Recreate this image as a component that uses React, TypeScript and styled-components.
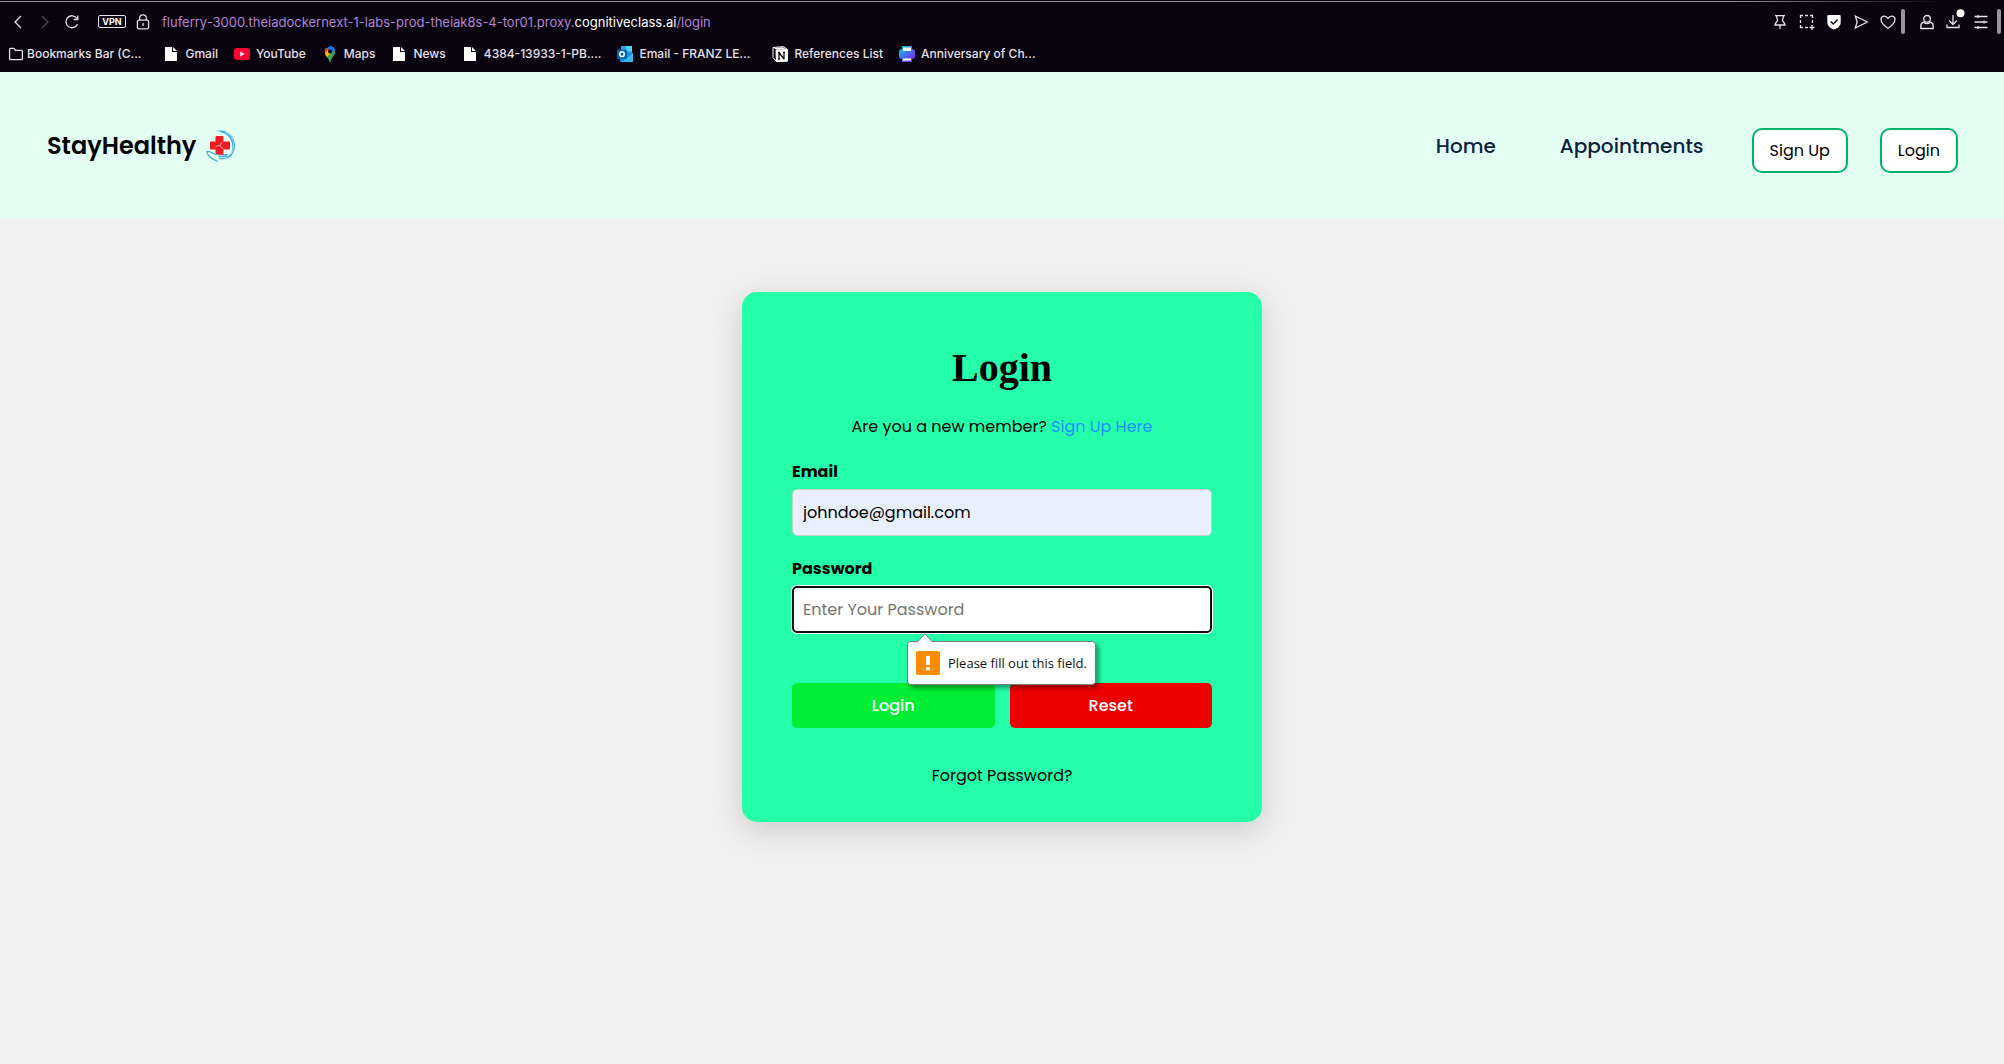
import React from "react";
import styled, { createGlobalStyle } from "styled-components";

const GlobalStyle = createGlobalStyle`
  * { box-sizing: border-box; }
  body {
    margin: 0;
    background: #f1f1f1;
    color: #000;
    font-family: Poppins, Inter, "Liberation Sans", sans-serif;
    font-size: 16px;
    line-height: 24px;
  }
  button, input { font: inherit; }
  a { color: inherit; text-decoration: none; }
`;

const Page = styled.div`
  min-height: 100vh;
  display: flex;
  flex-direction: column;
`;

/* ---------- browser chrome ---------- */

const Chrome = styled.header`
  display: flex;
  flex-direction: column;
  height: 72px;
  padding-top: 1px;
  background: #09030f;
  color: #e6e0ea;
  font-family: Inter, "Liberation Sans", sans-serif;
`;

const TopLine = styled.div`
  height: 1px;
  background: linear-gradient(90deg, #9a939f 0%, #9a939f 86%, #09030f 97%);
`;

const AddressRow = styled.div`
  display: flex;
  align-items: center;
  height: 39px;
  padding: 0 3px 0 4px;
`;

const IconButton = styled.button<{ $dim?: boolean }>`
  display: flex;
  flex: none;
  align-items: center;
  justify-content: center;
  width: 27px;
  height: 25px;
  padding: 0;
  border: 0;
  background: none;
  color: ${(p) => (p.$dim ? "#4d4852" : "#e6e0ea")};
`;

const NavButtons = styled.div`
  display: flex;
`;

const VpnBadge = styled.span`
  margin-left: 13px;
  width: 28px;
  height: 13px;
  border: 1px solid #e6e0ea;
  border-radius: 2px;
  color: #fff;
  font-size: 9px;
  font-weight: 700;
  line-height: 11px;
  text-align: center;
`;

const Lock = styled.span`
  display: flex;
  margin: 0 11px 0 9px;
`;

const Address = styled.span`
  flex: 1;
  color: #b083d6;
  font-size: 13px;
  line-height: 20px;
  white-space: nowrap;
`;

const Host = styled.span`
  color: #fff;
`;

const Tools = styled.div`
  display: flex;
  align-items: center;
`;

const Divider = styled.span`
  width: 4px;
  height: 25px;
  border-radius: 2px;
  background: #99959c;
`;

const ToolGroup = styled.div`
  display: flex;
  margin: 0 3px 0 8px;
`;

const Bookmarks = styled.nav`
  display: flex;
  align-items: center;
  gap: 16px;
  height: 26px;
  padding-left: 8px;
`;

const Bookmark = styled.a<{ $cut?: boolean; $tight?: boolean }>`
  display: flex;
  align-items: center;
  gap: ${(p) => (p.$tight ? "3px" : "6px")};
  padding-right: ${(p) => (p.$cut ? "6px" : "0")};
  font-size: 12px;
  font-weight: 500;
  line-height: 16px;
  white-space: nowrap;
`;

/* ---------- site header ---------- */

const SiteHeader = styled.div`
  display: flex;
  align-items: center;
  justify-content: space-between;
  height: 147px;
  padding: 0 46px 0 47px;
  background: #e3fff3;
`;

const Brand = styled.a`
  display: flex;
  align-items: center;
  gap: 9px;
  font-size: 24px;
  font-weight: 600;
  line-height: 36px;
`;

const Menu = styled.nav`
  display: flex;
  align-items: center;
  gap: 32px;
`;

const MenuLink = styled.a`
  padding: 0 16px;
  color: #0d213f;
  font-size: 20px;
  font-weight: 500;
  line-height: 30px;
`;

const OutlineButton = styled.button`
  height: 45px;
  margin-top: 10px;
  padding: 0 16px;
  border: 2px solid #00b26e;
  border-radius: 10px;
  background: #fff;
  color: #000;
`;

/* ---------- login card ---------- */

const Main = styled.main`
  display: flex;
  justify-content: center;
  padding-top: 73px;
`;

const Card = styled.form`
  width: 520px;
  padding: 52px 50px 34px;
  border-radius: 15px;
  background: #26ffaa;
  box-shadow: 0 8px 32px rgba(0, 0, 0, 0.16);
`;

const Title = styled.h1`
  margin: 0 0 23px;
  font-family: "Liberation Serif", serif;
  font-size: 40px;
  line-height: 48px;
  text-align: center;
`;

const Centered = styled.p`
  margin: 0;
  text-align: center;
`;

const SignUpLink = styled.a`
  color: #1e90ff;
`;

const Field = styled.div`
  position: relative;
  display: flex;
  flex-direction: column;
  gap: 5px;
  margin-top: 21px;
`;

const Label = styled.label`
  font-weight: 700;
`;

const Input = styled.input<{ $filled?: boolean; $active?: boolean }>`
  width: 100%;
  height: 47px;
  padding: 0 ${(p) => (p.$active ? "9px" : "10px")};
  border: ${(p) => (p.$active ? "2px solid #101010" : "1px solid #ccc")};
  border-radius: 5px;
  outline: 0;
  background: ${(p) => (p.$filled ? "#e8f0fe" : "#fff")};
  box-shadow: ${(p) => (p.$active ? "0 0 0 1px #fff" : "none")};
  color: #000;
  &::placeholder { color: #757575; opacity: 1; }
`;

const Bubble = styled.div`
  position: absolute;
  top: calc(100% + 8px);
  left: 115px;
  display: flex;
  align-items: center;
  gap: 8px;
  height: 44px;
  padding: 0 8px;
  border: 1px solid #7c7c7c;
  border-radius: 4px;
  background: #fff;
  box-shadow: 3px 3px 5px rgba(0, 0, 0, 0.4);
  color: #111;
  font-family: "Open Sans", "Noto Sans", sans-serif;
  font-size: 13px;
  line-height: 20px;
  white-space: nowrap;
`;

const Pointer = styled.svg`
  position: absolute;
  top: -9px;
  left: 8px;
`;

const Actions = styled.div`
  display: grid;
  grid-template-columns: 1fr 1fr;
  gap: 15px;
  margin: 50px 0 36px;
`;

const ActionButton = styled.button<{ $tone: string }>`
  height: 45px;
  padding: 0;
  border: 0;
  border-radius: 5px;
  background: ${(p) => p.$tone};
  color: #fff;
  font-weight: 500;
`;

/* ---------- drawings ---------- */

const Line = ({ children }: { children: React.ReactNode }) => (
  <svg width="16" height="16" viewBox="0 0 16 16" fill="none" stroke="currentColor" strokeWidth="1.3">
    {children}
  </svg>
);

const FileIcon = () => (
  <svg width="16" height="16" viewBox="0 0 16 16">
    <path d="M2 1h7v5h5v9H2z" fill="#fff" />
    <path d="M10 1l4 4h-4z" fill="#fff" />
  </svg>
);

const FolderIcon = () => (
  <Line>
    <path d="M1.600 3.200q0-.9.9-.9h3.200l1.800 2h6q.9 0 .9.9v7.600q0 .9-.9.9h-11q-.9 0-.9-.9z" />
  </Line>
);

const YoutubeIcon = () => (
  <svg width="16" height="16" viewBox="0 0 16 16">
    <rect y="2" width="16" height="12" rx="3" fill="#ff0033" />
    <path d="M6.300 5.500v5L10.800 8z" fill="#fff" />
  </svg>
);

const MapsIcon = () => (
  <svg width="16" height="16" viewBox="0 0 16 16">
    <path d="M8 0a5.400 5.400 0 0 1 5.200 4L8 10 3.500 3z" fill="#1a73e8" />
    <path d="M3.800 2A5.400 5.400 0 0 0 3.400 8L8 4z" fill="#ea4335" />
    <path d="M3 7l3-3 3 3-4 4.500Q3.200 9.500 3 7z" fill="#fbbc04" />
    <path d="M13.200 4q.8 3-1.400 5.500Q9.300 12.500 8.500 16h-1Q7 13.500 5 11.300z" fill="#34a853" />
    <circle cx="8" cy="5.400" r="2" fill="#09030f" />
  </svg>
);

const OutlookIcon = () => (
  <svg width="16" height="16" viewBox="0 0 16 16">
    <path d="M4 0h11v9H4z" fill="#28a8ea" />
    <path d="M9 0h6v5H9z" fill="#50d9ff" />
    <path d="M3 6l13 1v9H4q-1 0-1-1z" fill="#1490df" />
    <path d="M16 7v9H5z" fill="#35b8f1" />
    <rect y="3.500" width="10" height="9.500" rx="1" fill="#0364b8" />
    <ellipse cx="5" cy="8.200" rx="2.200" ry="2.400" fill="none" stroke="#fff" strokeWidth="1.500" />
  </svg>
);

const NotionIcon = () => (
  <svg width="16" height="16" viewBox="0 0 16 16">
    <path d="M1 1.500L11.500.6 15.400 3.400V15L4.400 15.500 1 11.600z" fill="#09030f" stroke="#fff" />
    <path d="M4 4.200l11.400-.8V15l-11 .5z" fill="#fff" stroke="#fff" />
    <path d="M2 2l9-.7 2.600 1.700-9.300.7z" fill="#fff" />
    <path d="M6 6.500h2M7 6.500v6.700M6 13.200h2M7 6.500l5 6.500M12 13.300V6.300M11 6.300h2" fill="none" stroke="#09030f" strokeWidth="1.300" />
  </svg>
);

const PrinterIcon = () => (
  <svg width="16" height="16" viewBox="0 0 16 16">
    <defs>
      <linearGradient id="printer" x1="0" y1="0" x2="1" y2="1">
        <stop offset="0.1" stopColor="#00c4cc" />
        <stop offset="0.5" stopColor="#4a6cf5" />
        <stop offset="0.9" stopColor="#7d2ae8" />
      </linearGradient>
    </defs>
    <path d="M3 0h10v3q3 0 3 3v4q0 3-3 3v3H3v-3q-3 0-3-3V6q0-3 3-3z" fill="url(#printer)" />
    <path d="M4 1.500h8V5H4zM4 12.500h8v2H4z" fill="#fff" />
  </svg>
);

const HealthLogo = () => (
  <svg width="32" height="32" viewBox="0 0 32 32" fill="none">
    <path d="M11 1C20-1.500 30 5 30 15.500c0 7-4 11.500-9 14.500 4.500-4 6.700-8.500 6.400-14C27 7 20 2 11 1z" fill="#35a9df" />
    <path d="M20 2.500c6 2.500 9 7.500 8.700 13-.2 4.500-2 8-5 11" stroke="#b9e6f7" strokeWidth=".8" />
    <path d="M1.500 21.500c3-1 6 1.500 9 3 3.500.8 7 .2 11.500.2-.5 2-5 2.300-8.500 2M1.500 21.500c1.500 4.500 5.500 8 11.500 10M14 28.500c5 1 8.500-.5 11-4" stroke="#43afd9" strokeWidth="1.200" />
    <path d="M11.500 6h6q1 0 1 1v4.500h5.500q1 0 1 1V18.500q0 1-1 1h-5.500v5q-4 1-8-.8v-4.200H6q-1 0-1-1v-6q0-1 1-1h4.500V7q0-1 1-1z" fill="#ed1c24" />
    <path d="M17.500 12q-2.500 1.500-2 4M10.500 17q2.500-2.500 5-1M15.500 16q.5 2 3 3" stroke="#f9c9cc" strokeWidth=".7" />
  </svg>
);

const bookmarks = [
  { label: "Bookmarks Bar (C...", icon: <FolderIcon />, cut: true, tight: true },
  { label: "Gmail", icon: <FileIcon /> },
  { label: "YouTube", icon: <YoutubeIcon /> },
  { label: "Maps", icon: <MapsIcon /> },
  { label: "News", icon: <FileIcon /> },
  { label: "4384-13933-1-PB....", icon: <FileIcon /> },
  { label: "Email - FRANZ LE...", icon: <OutlookIcon />, cut: true },
  { label: "References List", icon: <NotionIcon /> },
  { label: "Anniversary of Ch...", icon: <PrinterIcon /> },
];

const BrowserBar = () => (
  <Chrome>
    <TopLine />
    <AddressRow>
      <NavButtons>
        <IconButton aria-label="Back"><Line><path d="M11 2L5 8l6 6" /></Line></IconButton>
        <IconButton aria-label="Forward" $dim><Line><path d="M5 2l6 6-6 6" /></Line></IconButton>
        <IconButton aria-label="Reload">
          <Line><path d="M13.500 10A6 6 0 1 1 13 4.500M13.800 1.500v4h-4" /></Line>
        </IconButton>
      </NavButtons>
      <VpnBadge>VPN</VpnBadge>
      <Lock>
        <Line>
          <path d="M4.700 6V4.200a3.300 3.300 0 0 1 6.600 0V6M8 9v3" />
          <rect x="2.400" y="6.200" width="11.200" height="8.600" rx="1.500" />
        </Line>
      </Lock>
      <Address>
        fluferry-3000.theiadockernext-1-labs-prod-theiak8s-4-tor01.proxy.<Host>cognitiveclass.ai</Host>/login
      </Address>
      <Tools>
        <IconButton aria-label="Pin">
          <Line><path d="M3 1.700h10M4.500 1.700c0 2 1 3 1 4.500S3 9 3 11h10c0-2-2.500-3.300-2.500-4.800s1-2.500 1-4.500M8 11v4" /></Line>
        </IconButton>
        <IconButton aria-label="Snapshot">
          <Line>
            <path d="M1.500 4V1.500H4M6 1.500h3M11 1.500h2.500V4M1.500 6v3M1.500 11v2.500H4M6 13.500h3M13.500 6v3M13 11v5M10.500 13.500h5" />
          </Line>
        </IconButton>
        <IconButton aria-label="Ad blocker">
          <Line>
            <path d="M2.500 1h11q1.200 0 1.200 1.200v6.300c0 3.300-2.700 5.800-6.700 7-4-1.200-6.700-3.700-6.700-7V2.200Q1.300 1 2.500 1z" fill="#fff" stroke="none" />
            <path d="M4.700 7.500L7.300 10l4.300-4.500" stroke="#09030f" strokeWidth="1.500" />
          </Line>
        </IconButton>
        <IconButton aria-label="Send">
          <Line><path d="M2.300 2l12 6-12 6 1.800-6z" /></Line>
        </IconButton>
        <IconButton aria-label="Favourite">
          <Line><path d="M8 14.500C4 11.500 1 9 1 5.500 1 1.500 6 .8 8 4.500c2-3.700 7-3 7 1 0 3.500-3 6-7 9z" /></Line>
        </IconButton>
        <Divider />
        <ToolGroup>
          <IconButton aria-label="Profile">
            <Line>
              <circle cx="8" cy="4.800" r="3.300" />
              <path d="M4.500 8.200C2.500 8.800 1.800 10 1.800 12v2.500h12.400V12c0-2-.7-3.200-2.700-3.800-2 1.700-5 1.700-7 0z" />
            </Line>
          </IconButton>
          <IconButton aria-label="Downloads">
            <svg width="27" height="25" viewBox="0 0 27 25" fill="none" stroke="currentColor" strokeWidth="1.300">
              <path d="M13 6v9M9 11.500l4 4 4-4M7 15.500v3h12v-3" />
              <circle cx="20.500" cy="4.200" r="4" fill="#fff" stroke="none" />
            </svg>
          </IconButton>
          <IconButton aria-label="Easy setup">
            <Line><path d="M1.500 2.500h13M1.500 8h13M1.500 13.500h13M5 1v3M11 6.500v3M5 12v3" /></Line>
          </IconButton>
        </ToolGroup>
        <Divider />
      </Tools>
    </AddressRow>
    <Bookmarks>
      {bookmarks.map((b) => (
        <Bookmark href="#" key={b.label} $cut={b.cut} $tight={b.tight}>{b.icon}{b.label}</Bookmark>
      ))}
    </Bookmarks>
  </Chrome>
);

const LoginCard = () => (
  <Card noValidate onSubmit={(e) => e.preventDefault()}>
    <Title>Login</Title>
    <Centered>Are you a new member? <SignUpLink href="#">Sign Up Here</SignUpLink></Centered>
    <Field>
      <Label htmlFor="email">Email</Label>
      <Input id="email" type="email" defaultValue="johndoe@gmail.com" $filled />
    </Field>
    <Field>
      <Label htmlFor="password">Password</Label>
      <Input id="password" type="password" placeholder="Enter Your Password" $active />
      <Bubble role="alert">
        <Pointer width="18" height="10" viewBox="0 0 18 10">
          <path d="M1 9.500L9 1l8 8.500" fill="#fff" stroke="#7c7c7c" />
          <path d="M1 9.500h16" stroke="#fff" />
        </Pointer>
        <svg width="24" height="24" viewBox="0 0 24 24">
          <rect width="24" height="24" rx="2" fill="#ff8c00" />
          <path d="M10 5h4v9h-4zM10 16h4v3h-4z" fill="#fff" />
        </svg>
        Please fill out this field.
      </Bubble>
    </Field>
    <Actions>
      <ActionButton type="submit" $tone="#00ee33">Login</ActionButton>
      <ActionButton type="reset" $tone="#ec0000">Reset</ActionButton>
    </Actions>
    <Centered><a href="#">Forgot Password?</a></Centered>
  </Card>
);

export default function App() {
  return (
    <Page>
      <GlobalStyle />
      <BrowserBar />
      <SiteHeader>
        <Brand href="#">StayHealthy<HealthLogo /></Brand>
        <Menu>
          <MenuLink href="#">Home</MenuLink>
          <MenuLink href="#">Appointments</MenuLink>
          <OutlineButton>Sign Up</OutlineButton>
          <OutlineButton>Login</OutlineButton>
        </Menu>
      </SiteHeader>
      <Main><LoginCard /></Main>
    </Page>
  );
}
